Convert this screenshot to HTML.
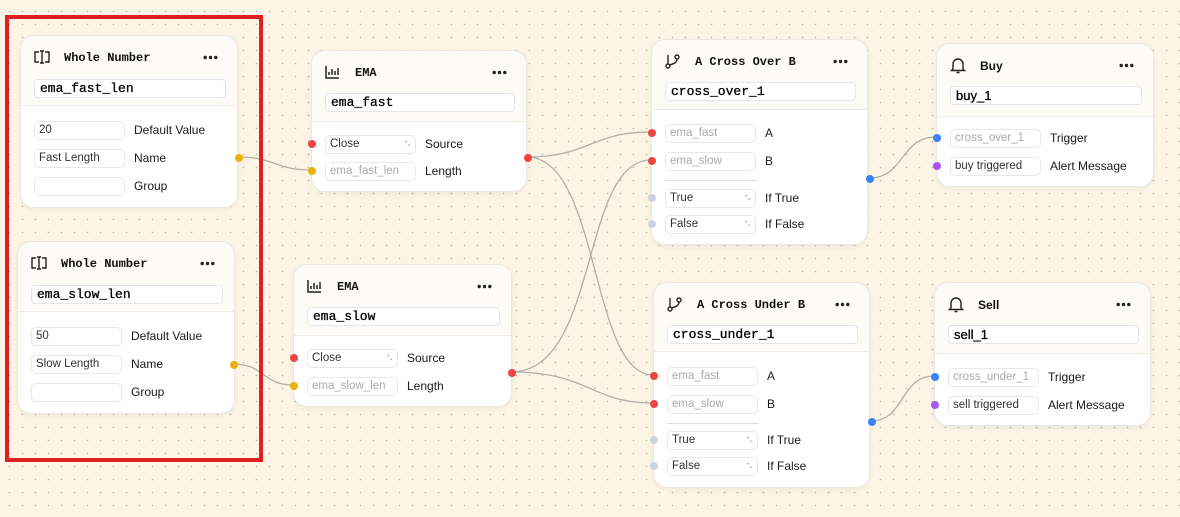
<!DOCTYPE html>
<html><head><meta charset="utf-8"><style>
*{box-sizing:border-box;margin:0;padding:0}
body{width:1180px;height:517px;overflow:hidden;position:relative;background:#fcf4e4;
background-image:radial-gradient(circle,#c4bcae 0.7px,transparent 1px);background-size:13px 13px;background-position:3px 5px;
font-family:"Liberation Sans",sans-serif;font-size:12px;color:#1a1a1a}
.node{position:absolute;background:#fff;border:1px solid #ebe8e2;border-radius:14px;box-shadow:0 2px 6px rgba(0,0,0,.05)}
.hd{background:#fdfbf6;border-radius:14px 14px 0 0;border-bottom:1px solid #ecebe6;position:relative}
.title{position:absolute;font-family:"Liberation Mono",monospace;font-weight:bold;font-size:12px;color:#111}
.name{position:absolute;border:1px solid #e4e6ec;border-radius:4px;background:#fff;font-family:"Liberation Mono",monospace;font-size:13px;padding:0 5px;line-height:17px;color:#000;-webkit-text-stroke:0.3px #000}
.in{position:absolute;border:1px solid #e6e8ee;border-radius:5px;background:#fff;font-size:11.5px;padding:0 4px;line-height:17px;height:19px;color:#333}
.ph{color:#aaa}
.sel::after{content:"⌃⌄";position:absolute;right:6px;top:0;font-size:7px;color:#999;letter-spacing:-3px}
.lbl{position:absolute;font-size:12px}
.p{position:absolute;width:8px;height:8px;border-radius:50%}
.r{background:#ef4444}.y{background:#eab308}.b{background:#3b82f6}.g{background:#cbd3e0}.v{background:#a855f7}
svg.ic{position:absolute}
</style></head><body>
<svg style="position:absolute;left:0;top:0" width="1180" height="517"><g fill="none" stroke="#b3aea8" stroke-width="1.3">
<path d="M238 157 C275 157,275 170,311 170"/>
<path d="M233 364 C265 364,262 385,293 385"/>
<path d="M527 157 C590 157,590 132,651 132"/>
<path d="M527 157 C600 157,590 375,653 375"/>
<path d="M511 372 C600 372,580 160,651 160"/>
<path d="M511 372 C590 372,590 403,653 403"/>
<path d="M869 178 C905 178,900 137,936 137"/>
<path d="M871 421 C905 421,900 376,934 376"/>
</g></svg>
<div style="position:absolute;left:5px;top:15px;width:258px;height:447px;border:4px solid #e02020"></div>
<div id="root"></div>
<script>
const icons={
num:'<path d="M6 3H2v10h4M12 3h4v10h-4M7 2h4M9 2v12M7 14h4" stroke="#222" stroke-width="1.4" fill="none"/>',
ema:'<path d="M2 2v12h13M5 11V8M8 11V5M11 11V7M14 11V4" stroke="#222" stroke-width="1.5" fill="none"/>',
cross:'<circle cx="4" cy="13" r="2" stroke="#222" stroke-width="1.4" fill="none"/><circle cx="13" cy="4" r="2" stroke="#222" stroke-width="1.4" fill="none"/><path d="M4 2v9M13 6c0 4-4 5-8 6" stroke="#222" stroke-width="1.4" fill="none"/>',
bell:'<path d="M4 12V7a5 5 0 0 1 10 0v5l1.5 1.5h-13zM7.5 15.5h3" stroke="#222" stroke-width="1.4" fill="none"/>'};
const N=[
{x:20,y:35,w:218,h:173,hh:70,t:"Whole Number",ic:"num",n:"ema_fast_len",rows:[[120,"20","Default Value",0],[148,"Fast Length","Name",0],[176,"","Group",0]],rp:[238,157,"y"]},
{x:17,y:241,w:218,h:173,hh:70,t:"Whole Number",ic:"num",n:"ema_slow_len",rows:[[326,"50","Default Value",0],[354,"Slow Length","Name",0],[382,"","Group",0]],rp:[233,364,"y"]},
{x:311,y:50,w:216,h:142,hh:71,t:"EMA",ic:"ema",n:"ema_fast",rows:[[134,"Close","Source","sel","r"],[161,"ema_fast_len","Length","ph","y"]],rp:[527,157,"r"]},
{x:293,y:264,w:219,h:143,hh:71,t:"EMA",ic:"ema",n:"ema_slow",rows:[[348,"Close","Source","sel","r"],[376,"ema_slow_len","Length","ph","y"]],rp:[511,372,"r"]},
{x:651,y:39,w:217,h:206,hh:70,t:"A Cross Over B",ic:"cross",n:"cross_over_1",rows:[[123,"ema_fast","A","ph","r"],[151,"ema_slow","B","ph","r"],[188,"True","If True","sel","g"],[214,"False","If False","sel","g"]],rp:[869,178,"b"],div:179},
{x:653,y:282,w:217,h:206,hh:69,t:"A Cross Under B",ic:"cross",n:"cross_under_1",rows:[[366,"ema_fast","A","ph","r"],[394,"ema_slow","B","ph","r"],[430,"True","If True","sel","g"],[456,"False","If False","sel","g"]],rp:[871,421,"b"],div:422},
{x:936,y:43,w:218,h:144,hh:73,t:"Buy",ic:"bell",n:"buy_1",sans:1,rows:[[128,"cross_over_1","Trigger","ph","b"],[156,"buy triggered","Alert Message",0,"v"]]},
{x:934,y:282,w:217,h:144,hh:71,t:"Sell",ic:"bell",n:"sell_1",sans:1,rows:[[367,"cross_under_1","Trigger","ph","b"],[395,"sell triggered","Alert Message",0,"v"]]}
];
let h="";
for(const d of N){
 let s=`<div class="node" style="left:${d.x}px;top:${d.y}px;width:${d.w}px;height:${d.h}px"><div class="hd" style="height:${d.hh}px">`;
 s+=`<svg class="ic" style="left:12px;top:13px" width="18" height="18" viewBox="0 0 18 18">${icons[d.ic]}</svg>`;
 s+=`<div class="title" style="left:43px;top:15px;${d.sans?'font-family:Liberation Sans,sans-serif;':''}">${d.t}</div>`;
 s+=`<svg style="position:absolute;right:19px;top:19px" width="15" height="5"><circle cx="2.2" cy="2.5" r="1.7" fill="#222"/><circle cx="7.5" cy="2.5" r="1.7" fill="#222"/><circle cx="12.8" cy="2.5" r="1.7" fill="#222"/></svg>`;
 s+=`<div class="name" style="left:13px;top:${d.ic=='num'?43:42}px;width:${d.w-26}px;${d.sans?'font-family:Liberation Sans,sans-serif;':''}">${d.n}</div></div>`;
 if(d.div) s+=`<div style="position:absolute;left:13px;width:92px;top:${d.div-d.y}px;border-top:1px solid #ddd"></div>`;
 for(const r of d.rows){
  const ty=r[0]-d.y;
  const c=r[3]=="ph"?"ph":(r[3]=="sel"?"sel":"");
  s+=`<div class="in ${c}" style="left:13px;top:${ty}px;width:91px">${r[1]}</div>`;
  s+=`<div class="lbl" style="left:113px;top:${ty+2}px">${r[2]}</div>`;
  if(r[4]) s+=`<div class="p ${r[4]}" style="left:-4px;top:${ty+5}px"></div>`;
 }
 if(d.rp) s+=`<div class="p ${d.rp[2]}" style="left:${d.rp[0]-d.x-4}px;top:${d.rp[1]-d.y-4}px"></div>`;
 s+="</div>";h+=s;
}
document.getElementById("root").innerHTML=h;
</script>
</body></html>
